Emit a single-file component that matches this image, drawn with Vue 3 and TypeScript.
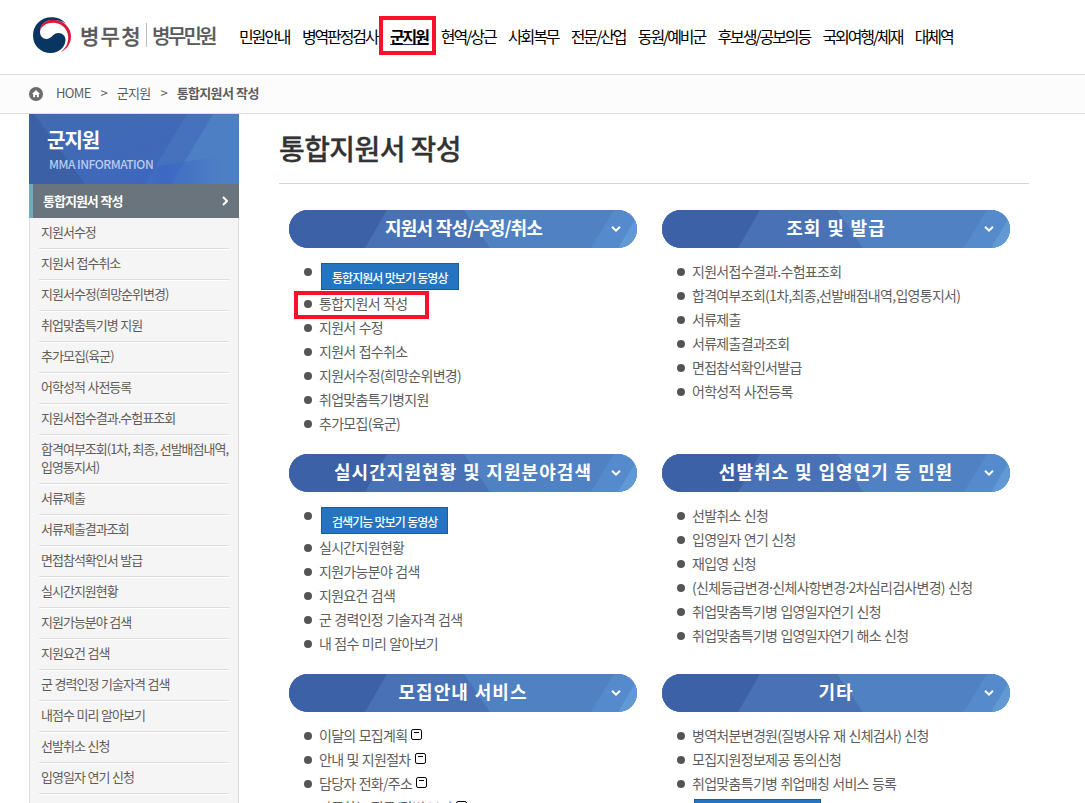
<script setup lang="ts">
interface Entry { text: string; kind?: 'button' | 'window' }
interface Section { title: string; tight?: boolean; entries: Entry[] }

const menu: string[] = ['민원안내', '병역판정검사', '군지원', '현역/상근', '사회복무', '전문/산업', '동원/예비군', '후보생/공보의등', '국외여행/체재', '대체역']

const side: string[] = [
  '지원서수정', '지원서 접수취소', '지원서수정(희망순위변경)', '취업맞춤특기병 지원', '추가모집(육군)',
  '어학성적 사전등록', '지원서접수결과.수험표조회', '합격여부조회(1차, 최종, 선발배점내역,\n입영통지서)',
  '서류제출', '서류제출결과조회', '면접참석확인서 발급', '실시간지원현황', '지원가능분야 검색', '지원요건 검색',
  '군 경력인정 기술자격 검색', '내점수 미리 알아보기', '선발취소 신청', '입영일자 연기 신청',
]

const list = (...texts: string[]): Entry[] => texts.map((text) => ({ text }))

const sections: Section[] = [
  {
    title: '지원서 작성/수정/취소', tight: true,
    entries: [{ text: '통합지원서 맛보기 동영상', kind: 'button' }, ...list('통합지원서 작성', '지원서 수정', '지원서 접수취소', '지원서수정(희망순위변경)', '취업맞춤특기병지원', '추가모집(육군)')],
  },
  {
    title: '조회 및 발급',
    entries: list('지원서접수결과.수험표조회', '합격여부조회(1차,최종,선발배점내역,입영통지서)', '서류제출', '서류제출결과조회', '면접참석확인서발급', '어학성적 사전등록'),
  },
  {
    title: '실시간지원현황 및 지원분야검색',
    entries: [{ text: '검색기능 맛보기 동영상', kind: 'button' }, ...list('실시간지원현황', '지원가능분야 검색', '지원요건 검색', '군 경력인정 기술자격 검색', '내 점수 미리 알아보기')],
  },
  {
    title: '선발취소 및 입영연기 등 민원',
    entries: list('선발취소 신청', '입영일자 연기 신청', '재입영 신청', '(신체등급변경·신체사항변경·2차심리검사변경) 신청', '취업맞춤특기병 입영일자연기 신청', '취업맞춤특기병 입영일자연기 해소 신청'),
  },
  {
    title: '모집안내 서비스',
    entries: [
      { text: '이달의 모집계획', kind: 'window' }, { text: '안내 및 지원절차', kind: 'window' },
      { text: '담당자 전화/주소', kind: 'window' }, { text: '자주하는 질문/답변 보기', kind: 'window' },
    ],
  },
  {
    title: '기타',
    entries: [...list('병역처분변경원(질병사유 재 신체검사) 신청', '모집지원정보제공 동의신청', '취업맞춤특기병 취업매칭 서비스 등록'), { text: '취업매칭 맛보기 동영상', kind: 'button' }],
  },
]

const pieces = (text: string): string[] => text.split(/(·)/)
</script>

<template>
  <div class="page">
    <header class="top">
      <div class="brand">
        <svg class="emblem" viewBox="0 0 40 38" width="40" height="38">
          <path d="M1 18.500C1 8 9 .3 19.500 .3C26 .3 31 3 34 7C30 4 26 3 22 3C14 2.500 8 7 8 15C8 19 11 22.300 15 22C20 21.500 21 16 26.500 16C30.500 16 33.500 19 33.500 23C33.500 30 26.500 36 19 36C8.500 36 1 28.500 1 18.500Z" fill="#083562" />
          <path d="M8 14C8 7 14 2.500 22 2.700C31 3 39 10 39 19.500C39 27 34.500 32.500 28 35.600C33.500 31.500 36.500 26.500 36.200 20C36 11.500 29 5.800 21 5.800C14.500 5.800 9.500 9 8 14Z" fill="#d8173a" />
        </svg>
        <span class="agency">병무청</span>
        <span class="portal">병무민원</span>
      </div>
      <nav class="menu">
        <a v-for="m in menu" :key="m" :class="{ current: m === '군지원' }">{{ m }}<i v-if="m === '군지원'" class="mark mark-menu" /></a>
      </nav>
    </header>

    <div class="crumbs">
      <svg class="home" viewBox="0 0 14 14" width="14" height="14">
        <circle cx="7" cy="7" r="7" fill="#6b6b6b" />
        <path d="M7 3L3 7H4.2V10.2H6.1V8H7.9V10.2H9.8V7H11Z" fill="#fff" />
      </svg>
      <span>HOME</span><span class="sep">&gt;</span><span>군지원</span><span class="sep">&gt;</span><b>통합지원서 작성</b>
    </div>

    <div class="body">
      <aside class="side">
        <div class="side-head">
          <svg class="facets" viewBox="0 0 210 70" width="210" height="70">
            <defs>
              <linearGradient id="base" x1="0" y1="0" x2="1" y2="1">
                <stop offset="0" stop-color="#426bb3" /><stop offset="1" stop-color="#3d67bd" />
              </linearGradient>
              <linearGradient id="sheen" x1="0" y1="0" x2="1" y2="0">
                <stop offset="0" stop-color="#3b66c4" stop-opacity="0" /><stop offset=".5" stop-color="#3b66c4" stop-opacity=".75" /><stop offset="1" stop-color="#3b66c4" stop-opacity="0" />
              </linearGradient>
            </defs>
            <rect width="210" height="70" fill="url(#base)" />
            <path d="M0 0H5L56 70H0Z" fill="#3c60a6" />
            <path d="M158 0H184L142 70H116Z" fill="#4672bd" />
            <path d="M184 0H210V70H142Z" fill="#4d7fc5" />
            <path d="M80 62L128 52L192 42V70H80Z" fill="url(#sheen)" />
          </svg>
          <strong>군지원</strong>
          <em>MMA INFORMATION</em>
        </div>
        <div class="side-active">
          <span>통합지원서 작성</span>
          <svg viewBox="0 0 6 10" width="6" height="10"><path d="M1 1L5 5L1 9" fill="none" stroke="#fff" stroke-width="2" /></svg>
        </div>
        <ul class="side-list">
          <li v-for="s in side" :key="s">{{ s }}</li>
        </ul>
      </aside>

      <main class="main">
        <h1>통합지원서 작성</h1>
        <div class="grid">
          <section v-for="s in sections" :key="s.title">
            <h2 :class="{ tight: s.tight }">
              <svg class="facets" viewBox="0 0 348 38" width="348" height="38">
                <rect width="348" height="38" fill="#5082c3" />
                <path d="M0 0H175L201 38H0Z" fill="#4872b5" />
                <path d="M0 0H98L76 38H0Z" fill="#3d61a6" />
                <path d="M325 0H348V38H302Z" fill="#558bcd" />
                <path d="M348 6V38H329Z" fill="#6199d5" />
              </svg>
              <span>{{ s.title }}</span>
              <svg class="chevron" viewBox="0 0 10 6" width="10" height="6"><path d="M1 .8L5 4.6L9 .8" fill="none" stroke="#fff" stroke-width="2" /></svg>
            </h2>
            <ul class="links">
              <li v-for="e in s.entries" :key="e.text" :class="{ tall: e.kind === 'button' }">
                <a v-if="e.kind === 'button'" class="btn">{{ e.text }}</a>
                <span v-else><span v-for="(p, i) in pieces(e.text)" :key="i" :class="{ dot: p === '·' }">{{ p }}</span></span>
                <svg v-if="e.kind === 'window'" class="win" viewBox="0 0 11 11" width="11" height="11">
                  <rect x=".5" y=".5" width="10" height="10" rx="1.6" fill="#fff" stroke="#000" /><path d="M3 3.5H8" stroke="#000" />
                </svg>
                <i v-if="s.tight && e.text === '통합지원서 작성'" class="mark mark-link" />
              </li>
            </ul>
          </section>
        </div>
      </main>
    </div>
  </div>
</template>

<style>
html, body { margin: 0; overflow: hidden; background: #fff; }
</style>

<style scoped>
.page { width: 1085px; height: 803px; overflow: hidden; font-family: "Noto Sans CJK KR", "Noto Sans", sans-serif; color: #555; }
ul, h1, h2 { margin: 0; padding: 0; list-style: none; }
.top { height: 74px; border-bottom: 1px solid #ddd; display: flex; align-items: flex-start; }
.brand { display: flex; width: 207px; padding: 17px 0 0 32px; color: #5a5a5a; white-space: nowrap; }
.emblem { flex: none; }
.agency { margin-left: 8px; width: 66px; font-size: 21px; line-height: 36px; letter-spacing: 1.3px; font-weight: 500; -webkit-text-stroke: .3px #5a5a5a; }
.portal { height: 24px; margin-top: 6px; padding-left: 5px; border-left: 1px solid #bbb; font-size: 20px; line-height: 25px; letter-spacing: -2.7px; font-weight: 500; -webkit-text-stroke: .2px #5a5a5a; }
.menu { display: flex; gap: 12.4px; padding-top: 24px; color: #000; font-size: 16px; line-height: 24px; letter-spacing: -2.1px; white-space: nowrap; }
.menu a { position: relative; }
.menu .current { font-weight: 700; text-decoration: underline; text-decoration-color: #17366f; margin-right: .6px; }
.mark { position: absolute; border: 4px solid #fb0f2b; box-sizing: border-box; }
.mark-menu { left: -11px; top: -8px; width: 57px; height: 39px; }
.mark-link { left: -25px; top: -1px; width: 135px; height: 28px; }
.crumbs { height: 38px; border-bottom: 1px solid #ddd; background: #fcfcfc; display: flex; align-items: center; padding-left: 29px; font-size: 13px; letter-spacing: -.65px; color: #5c5c5c; }
.crumbs span, .crumbs b { margin-top: -4px; word-spacing: .6px; }
.home { margin-right: 13px; }
.crumbs .sep { width: 26px; text-align: center; }
.body { display: flex; padding-left: 29px; }
.side { width: 210px; flex: none; }
.side-head { position: relative; height: 70px; color: #fff; }
.facets { position: absolute; left: 0; top: 0; }
.side-head strong, .side-head em { position: relative; display: block; font-style: normal; }
.side-head strong { padding: 11px 0 0 18px; font-size: 20px; line-height: 30px; letter-spacing: -1px; }
.side-head em { padding-left: 20px; font-size: 12px; line-height: 18px; font-weight: 500; letter-spacing: -.5px; color: #bcc9f0; }
.side-active { height: 34px; box-sizing: border-box; border-left: 4px solid #72a9c1; background: #69747c; color: #fff; display: flex; align-items: center; justify-content: space-between; padding: 0 11px 0 10px; font-size: 13px; font-weight: 700; letter-spacing: -1px; word-spacing: .7px; }
.side-active span { margin-top: -2px; }
.side-list { border: 1px solid #ddd; border-width: 0 1px; background: #f5f5f5; padding: 0 9px; height: 620px; }
.side-list li { padding: 5px 0 7px 2px; font-size: 13px; line-height: 18px; letter-spacing: -1px; word-spacing: .7px; white-space: pre; border-bottom: 1px solid #ddd; box-shadow: 0 1px #fff; color: #625c58; }
.main { width: 750px; margin-left: 40px; }
h1 { height: 69px; border-bottom: 1px solid #d5d5d5; font-size: 28px; line-height: 69px; font-weight: 500; letter-spacing: -.6px; color: #333; -webkit-text-stroke: .3px #333; }
.grid { display: grid; grid-template-columns: 348px 348px; column-gap: 25px; row-gap: 18px; padding: 26px 0 0 10px; }
h2 { position: relative; height: 38px; border-radius: 19px; overflow: hidden; color: #fff; text-align: center; font-size: 18px; line-height: 35px; letter-spacing: 1.05px; word-spacing: .6px; }
h2.tight { letter-spacing: -.9px; padding-left: 1px; }
h2 span { position: relative; }
.chevron { position: absolute; left: 322px; top: 16px; }
.links { padding: 12px 0 0 30px; }
.links li { position: relative; height: 24px; font-size: 14px; line-height: 23px; letter-spacing: -.7px; word-spacing: .7px; white-space: nowrap; color: #5e5e5e; }
.links li::before { content: ""; position: absolute; left: -15px; top: 8px; width: 8px; height: 8px; border-radius: 50%; background: #555; }
.links .tall { height: 32px; }
.dot { margin: 0 -2px; }
.btn { display: block; width: max-content; margin-left: 2px; position: relative; top: 3px; height: 25px; padding: 0 10px; border: 1px solid #1d5c96; background: #2474c2; color: #fff; font-size: 12px; font-weight: 500; line-height: 28px; letter-spacing: -.95px; word-spacing: .5px; }
.win { margin-left: 4px; vertical-align: 1px; }
</style>
